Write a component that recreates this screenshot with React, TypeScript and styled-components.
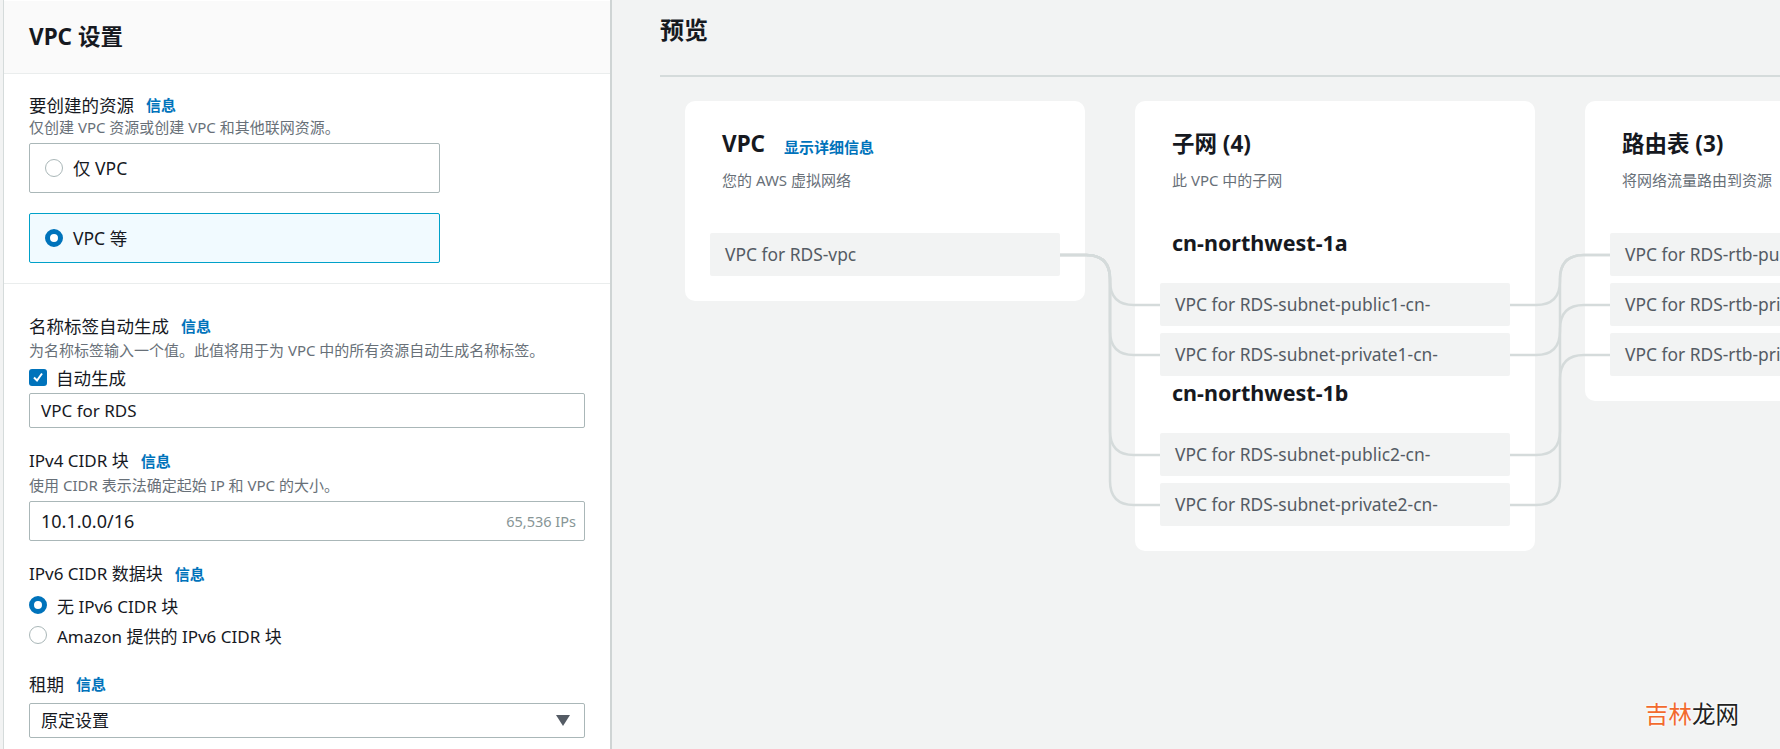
import React from "react";
import styled, { createGlobalStyle } from "styled-components";

const FONT = `"Noto Sans", "Noto Sans CJK SC", sans-serif`;

const Global = createGlobalStyle`
  html, body { margin: 0; padding: 0; width: 1780px; height: 749px; overflow: hidden; background: #f2f3f3; }
  * { box-sizing: border-box; }
  body { font-family: ${FONT}; color: #16191f; }
`;

const Page = styled.div`
  display: flex;
  width: 1780px;
  height: 749px;
  overflow: hidden;
  background: #f2f3f3;
`;

const Panel = styled.aside`
  flex: 0 0 609px;
  height: 749px;
  margin-left: 3px;
  padding-top: 1px;
  background: #fff;
  border-left: 1px solid #d5dbdb;
  border-right: 2px solid #cfd4d4;
`;

const PanelHeader = styled.header`
  display: flex;
  align-items: center;
  height: 73px;
  padding-left: 25px;
  background: #fafafa;
  border-bottom: 1px solid #eaeded;
`;

const PanelTitle = styled.h2`
  margin: 0;
  font-size: 22.5px;
  font-weight: 700;
  line-height: 28px;
`;

const Section = styled.section<{ $top: number; $bottom?: number; $line?: boolean }>`
  padding: ${(p) => p.$top}px 25px ${(p) => p.$bottom ?? 0}px;
  ${(p) => (p.$line ? "border-bottom: 1px solid #eaeded;" : "")}
`;

const Label = styled.div<{ $mt?: number; $fs?: number }>`
  display: flex;
  align-items: center;
  gap: 12px;
  height: 24px;
  margin-top: ${(p) => p.$mt ?? 0}px;
  font-size: ${(p) => p.$fs ?? 17.5}px;
  line-height: 24px;
  white-space: nowrap;
`;

const Info = styled.a`
  color: #0073bb;
  font-size: 15px;
  font-weight: 700;
`;

const Desc = styled.div<{ $mt?: number }>`
  height: 20px;
  margin-top: ${(p) => p.$mt ?? 0}px;
  font-size: 15px;
  line-height: 20px;
  color: #687078;
  white-space: nowrap;
`;

const RadioCard = styled.div<{ $checked?: boolean; $mt: number }>`
  display: flex;
  align-items: center;
  gap: 10px;
  width: 411px;
  height: 50px;
  margin-top: ${(p) => p.$mt}px;
  padding: 0 0 1px 15px;
  font-size: 17.5px;
  border-radius: 2px;
  border: 1px solid ${(p) => (p.$checked ? "#00a1c9" : "#aab7b8")};
  background: ${(p) => (p.$checked ? "#f1faff" : "#fff")};
`;

const RadioDot = styled.span<{ $checked?: boolean }>`
  flex: none;
  width: 18px;
  height: 18px;
  border-radius: 50%;
  background: #fff;
  border: ${(p) => (p.$checked ? "5px solid #0073bb" : "1.5px solid #aab7b8")};
`;

const CheckRow = styled.div<{ $mt: number; $h: number; $fs?: number; $gap?: number }>`
  display: flex;
  align-items: center;
  gap: ${(p) => p.$gap ?? 9}px;
  height: ${(p) => p.$h}px;
  margin-top: ${(p) => p.$mt}px;
  font-size: ${(p) => p.$fs ?? 17.5}px;
  white-space: nowrap;
`;

const CheckBox = styled.span`
  display: flex;
  align-items: center;
  justify-content: center;
  flex: none;
  width: 18px;
  height: 17px;
  border-radius: 3px;
  background: #0073bb;
`;

const Field = styled.div<{ $mt: number; $h: number; $fs?: number }>`
  display: flex;
  align-items: center;
  justify-content: space-between;
  width: 556px;
  height: ${(p) => p.$h}px;
  margin-top: ${(p) => p.$mt}px;
  padding: 0 8px 0 11px;
  font-size: ${(p) => p.$fs ?? 17}px;
  background: #fff;
  border: 1px solid #aab7b8;
  border-radius: 2px;
`;

const SelectText = styled.span`
  margin-top: -3px;
`;

const Hint = styled.span`
  font-size: 14.5px;
  color: #879596;
`;

const Caret = styled.svg`
  margin-right: 6px;
`;

const Preview = styled.main`
  flex: 1;
  min-width: 0;
  padding-left: 48px;
  overflow: hidden;
`;

const PreviewHead = styled.div`
  height: 77px;
  border-bottom: 2px solid #d5dbdb;
`;

const PreviewTitle = styled.h2`
  margin: 0;
  padding-top: 15px;
  font-size: 24px;
  line-height: 30px;
  font-weight: 700;
`;

const Canvas = styled.div`
  position: relative;
  display: flex;
  align-items: flex-start;
  gap: 50px;
  width: 1500px;
  margin-top: 24px;
  margin-left: 25px;
`;

const Lines = styled.svg`
  position: absolute;
  left: 0;
  top: 0;
  pointer-events: none;
`;

const Card = styled.section<{ $h: number }>`
  flex: none;
  width: 400px;
  height: ${(p) => p.$h}px;
  padding: 25px 25px 0;
  background: #fff;
  border-radius: 10px;
`;

const CardHead = styled.div`
  display: flex;
  align-items: center;
  gap: 19px;
  height: 36px;
  padding-left: 12px;
`;

const CardTitle = styled.h3`
  margin: 0;
  font-size: 22.5px;
  line-height: 36px;
  font-weight: 700;
  white-space: nowrap;
`;

const CardLink = styled.a`
  margin-top: 4px;
  font-size: 15px;
  font-weight: 700;
  color: #0073bb;
`;

const CardDesc = styled.div`
  height: 20px;
  margin-top: 8px;
  margin-bottom: 43px;
  padding-left: 12px;
  font-size: 15px;
  line-height: 20px;
  color: #687078;
  white-space: nowrap;
`;

const Zone = styled.h4`
  height: 30px;
  margin: -5px 0 25px;
  padding-left: 12px;
  font-size: 21.5px;
  line-height: 30px;
  font-weight: 700;
  white-space: nowrap;
`;

const ItemList = styled.div`
  display: flex;
  flex-direction: column;
  gap: 7px;
`;

const Item = styled.div`
  display: flex;
  align-items: center;
  height: 43px;
  padding: 0 0 2px 15px;
  font-size: 17.4px;
  color: #545b64;
  background: #f2f3f3;
  border-radius: 2px;
  white-space: nowrap;
`;

const ZoneBlock = styled.div`
  & + & {
    margin-top: 7px;
  }
`;

const Watermark = styled.div`
  position: absolute;
  left: 1645px;
  top: 698px;
  font-size: 23.5px;
  line-height: 30px;
  white-space: nowrap;
  color: #222;
  text-shadow: 0 0 3px #fff, 0 0 3px #fff;
  font-family: "Noto Sans CJK SC", sans-serif;
`;

const Orange = styled.span`
  color: #f26a2e;
`;

const SUBNET_Y = [204, 254, 354, 404];
const RIGHT_LINKS: [number, number][] = [
  [204, 154],
  [254, 204],
  [354, 154],
  [404, 254],
];

const conn = (x1: number, y1: number, x2: number, y2: number) => {
  const mid = (x1 + x2) / 2;
  const r = 24;
  const s = y2 > y1 ? 1 : -1;
  return `M${x1} ${y1} H${mid - r} Q${mid} ${y1} ${mid} ${y1 + s * r} V${y2 - s * r} Q${mid} ${y2} ${mid + r} ${y2} H${x2}`;
};

const InfoLabel = ({ text, mt, fs }: { text: string; mt?: number; fs?: number }) => (
  <Label $mt={mt} $fs={fs}>
    <span>{text}</span>
    <Info>信息</Info>
  </Label>
);

export default function App() {
  return (
    <Page>
      <Global />
      <Panel>
        <PanelHeader>
          <PanelTitle>VPC 设置</PanelTitle>
        </PanelHeader>
        <Section $top={19} $bottom={20} $line>
          <InfoLabel text="要创建的资源" />
          <Desc>仅创建 VPC 资源或创建 VPC 和其他联网资源。</Desc>
          <RadioCard $mt={6}>
            <RadioDot />
            仅 VPC
          </RadioCard>
          <RadioCard $mt={20} $checked>
            <RadioDot $checked />
            VPC 等
          </RadioCard>
        </Section>
        <Section $top={30}>
          <InfoLabel text="名称标签自动生成" />
          <Desc $mt={2}>为名称标签输入一个值。此值将用于为 VPC 中的所有资源自动生成名称标签。</Desc>
          <CheckRow $mt={7} $h={20}>
            <CheckBox>
              <svg width="12" height="12" viewBox="0 0 12 12">
                <path d="M2 6.5 L5 9.5 L10 2.5" fill="none" stroke="#fff" strokeWidth="2" />
              </svg>
            </CheckBox>
            自动生成
          </CheckRow>
          <Field $mt={6} $h={35}>VPC for RDS</Field>
          <InfoLabel text="IPv4 CIDR 块" mt={21} fs={17} />
          <Desc $mt={2}>使用 CIDR 表示法确定起始 IP 和 VPC 的大小。</Desc>
          <Field $mt={6} $h={40} $fs={18}>
            10.1.0.0/16
            <Hint>65,536 IPs</Hint>
          </Field>
          <InfoLabel text="IPv6 CIDR 数据块" mt={21} fs={17} />
          <CheckRow $mt={7} $h={24} $fs={17} $gap={10}>
            <RadioDot $checked />
            无 IPv6 CIDR 块
          </CheckRow>
          <CheckRow $mt={6} $h={24} $fs={17} $gap={10}>
            <RadioDot />
            Amazon 提供的 IPv6 CIDR 块
          </CheckRow>
          <InfoLabel text="租期" mt={25} />
          <Field $mt={7} $h={35}>
            <SelectText>原定设置</SelectText>
            <Caret width="14" height="11" viewBox="0 0 14 11">
              <path d="M0 0 H14 L7 11 Z" fill="#545b64" />
            </Caret>
          </Field>
        </Section>
      </Panel>
      <Preview>
        <PreviewHead>
          <PreviewTitle>预览</PreviewTitle>
        </PreviewHead>
        <Canvas>
          <Card $h={200}>
            <CardHead>
              <CardTitle>VPC</CardTitle>
              <CardLink>显示详细信息</CardLink>
            </CardHead>
            <CardDesc>您的 AWS 虚拟网络</CardDesc>
            <ItemList>
              <Item>VPC for RDS-vpc</Item>
            </ItemList>
          </Card>
          <Card $h={450}>
            <CardHead>
              <CardTitle>子网 (4)</CardTitle>
            </CardHead>
            <CardDesc>此 VPC 中的子网</CardDesc>
            <ZoneBlock>
              <Zone>cn-northwest-1a</Zone>
              <ItemList>
                <Item>VPC for RDS-subnet-public1-cn-</Item>
                <Item>VPC for RDS-subnet-private1-cn-</Item>
              </ItemList>
            </ZoneBlock>
            <ZoneBlock>
              <Zone>cn-northwest-1b</Zone>
              <ItemList>
                <Item>VPC for RDS-subnet-public2-cn-</Item>
                <Item>VPC for RDS-subnet-private2-cn-</Item>
              </ItemList>
            </ZoneBlock>
          </Card>
          <Card $h={300}>
            <CardHead>
              <CardTitle>路由表 (3)</CardTitle>
            </CardHead>
            <CardDesc>将网络流量路由到资源</CardDesc>
            <ItemList>
              <Item>VPC for RDS-rtb-public</Item>
              <Item>VPC for RDS-rtb-private1</Item>
              <Item>VPC for RDS-rtb-private2</Item>
            </ItemList>
          </Card>
          <Lines width="1300" height="460" fill="none" stroke="#d5dbdb" strokeWidth="2.5">
            {SUBNET_Y.map((y) => (
              <path key={y} d={conn(375, 154, 475, y)} />
            ))}
            {RIGHT_LINKS.map(([a, b]) => (
              <path key={a} d={conn(825, a, 925, b)} />
            ))}
          </Lines>
        </Canvas>
      </Preview>
      <Watermark>
        <Orange>吉林</Orange>龙网
      </Watermark>
    </Page>
  );
}
